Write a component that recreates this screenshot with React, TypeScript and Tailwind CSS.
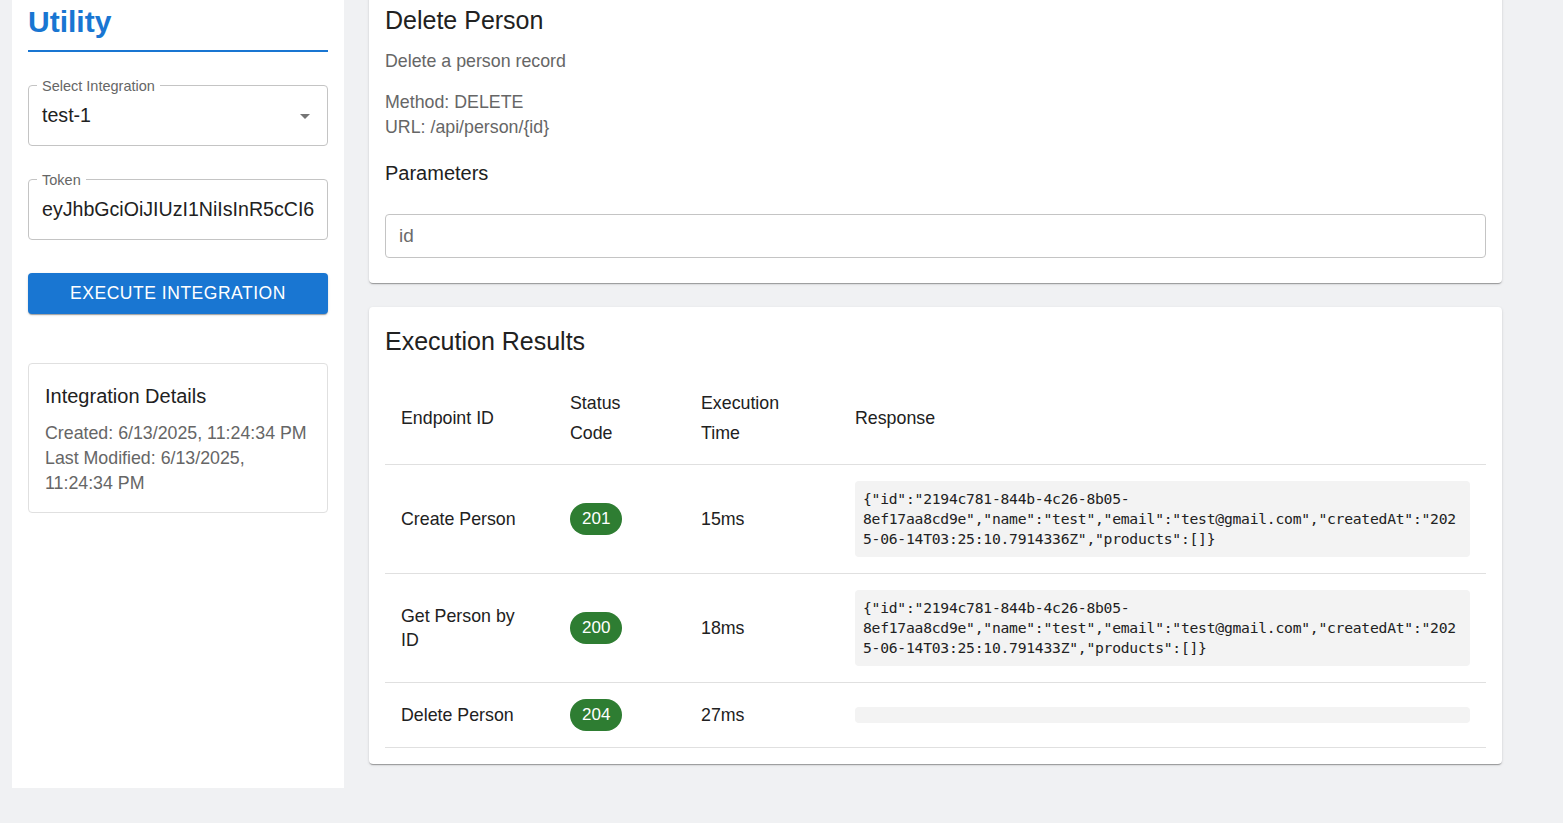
import React from 'react';

interface ResultRow {
  endpoint: string;
  status: number;
  time: string;
  response: string;
}

const RESULTS: ResultRow[] = [
  {
    endpoint: 'Create Person',
    status: 201,
    time: '15ms',
    response:
      '{"id":"2194c781-844b-4c26-8b05-8ef17aa8cd9e","name":"test","email":"test@gmail.com","createdAt":"2025-06-14T03:25:10.7914336Z","products":[]}',
  },
  {
    endpoint: 'Get Person by ID',
    status: 200,
    time: '18ms',
    response:
      '{"id":"2194c781-844b-4c26-8b05-8ef17aa8cd9e","name":"test","email":"test@gmail.com","createdAt":"2025-06-14T03:25:10.791433Z","products":[]}',
  },
  { endpoint: 'Delete Person', status: 204, time: '27ms', response: '' },
];

const TOKEN = 'eyJhbGciOiJIUzI1NiIsInR5cCI6IkpXVCJ9.eyJzdWIiOiIxMjM0NTY3ODkwIn0';

const cardShadow =
  'shadow-[0px_2px_1px_-1px_rgba(0,0,0,0.2),0px_1px_1px_0px_rgba(0,0,0,0.14),0px_1px_3px_0px_rgba(0,0,0,0.12)]';

const App: React.FC = () => {
  return (
    <div className="h-[823px] overflow-hidden bg-[#f0f1f3] font-['Liberation_Sans',Arial,sans-serif] text-[#212121]">
      <div className="flex items-start">
        {/* Sidebar */}
        <aside className="ml-3 w-[332px] h-[788px] bg-white px-4 pt-[4px]">
          <h1 className="text-[30px] leading-[36px] font-bold text-[#1976d2] pb-[10px] border-b-2 border-[#1976d2]">
            Utility
          </h1>

          <div className="relative mt-[33px] h-[61px] border border-[#c4c4c4] rounded flex items-center px-[13px]">
            <span className="absolute -top-[9px] left-[8px] px-[5px] bg-white text-[14.5px] leading-[18px] text-[#666]">
              Select Integration
            </span>
            <span className="text-[19.6px]">test-1</span>
            <svg className="absolute right-[10px] top-1/2 -translate-y-1/2 w-6 h-6 text-[#757575]" viewBox="0 0 24 24" fill="currentColor">
              <path d="M7 10l5 5 5-5z" />
            </svg>
          </div>

          <div className="relative mt-[33px] h-[61px] border border-[#c4c4c4] rounded flex items-center px-[13px]">
            <span className="absolute -top-[9px] left-[8px] px-[5px] bg-white text-[14.5px] leading-[18px] text-[#666]">
              Token
            </span>
            <input
              readOnly
              value={TOKEN}
              className="w-full bg-transparent outline-none text-[19.6px] text-[#212121] font-['Liberation_Sans',Arial,sans-serif]"
            />
          </div>

          <button className={`mt-[33px] w-full h-[41px] rounded bg-[#1976d2] text-white uppercase text-[17.5px] font-medium tracking-[0.03em] ${cardShadow}`}>
            Execute Integration
          </button>

          <div className="mt-[49px] border border-[#e0e0e0] rounded p-4">
            <h3 className="text-[20px] leading-[32px]">Integration Details</h3>
            <div className="mt-[9px] text-[17.8px] leading-[25px] text-[#666]">
              <p>Created: 6/13/2025, 11:24:34 PM</p>
              <p>Last Modified: 6/13/2025, 11:24:34 PM</p>
            </div>
          </div>
        </aside>

        {/* Main */}
        <main className="ml-[25px] w-[1133px] -mt-[12px] flex flex-col gap-6">
          <section className={`bg-white rounded px-4 pt-4 pb-[25px] ${cardShadow}`}>
            <h2 className="text-[25px] leading-[33px]">Delete Person</h2>
            <p className="mt-[11.5px] text-[17.8px] leading-[25px] text-[#666]">Delete a person record</p>
            <div className="mt-4 text-[17.8px] leading-[25px] text-[#666]">
              <p>Method: DELETE</p>
              <p>URL: /api/person/{'{id}'}</p>
            </div>
            <h3 className="mt-[17.5px] text-[20px] leading-[32px]">Parameters</h3>
            <div className="mt-[25px] h-[44px] border border-[#c4c4c4] rounded flex items-center px-[13px] text-[19px] text-[#6b6b6b]">
              id
            </div>
          </section>

          <section className={`bg-white rounded px-4 pt-[18px] pb-4 ${cardShadow}`}>
            <h2 className="text-[25px] leading-[33px]">Execution Results</h2>
            <table className="mt-[14px] w-full table-fixed border-collapse text-[17.8px]">
              <colgroup>
                <col className="w-[169px]" />
                <col className="w-[131px]" />
                <col className="w-[154px]" />
                <col />
              </colgroup>
              <thead>
                <tr className="border-b border-[#e0e0e0]">
                  <th className="p-4 text-left font-normal leading-[30px] align-middle">Endpoint ID</th>
                  <th className="p-4 text-left font-normal leading-[30px] align-middle">
                    Status
                    <br />
                    Code
                  </th>
                  <th className="p-4 text-left font-normal leading-[30px] align-middle">
                    Execution
                    <br />
                    Time
                  </th>
                  <th className="p-4 text-left font-normal leading-[30px] align-middle">Response</th>
                </tr>
              </thead>
              <tbody>
                {RESULTS.map(r => (
                  <tr key={r.endpoint} className="border-b border-[#e0e0e0]">
                    <td className="p-4 leading-[24px] align-middle">
                      <div className="max-w-[130px]">{r.endpoint}</div>
                    </td>
                    <td className="p-4 align-middle">
                      <span className="inline-flex items-center h-8 px-3 rounded-full bg-[#2e7d32] text-white text-[17px]">
                        {r.status}
                      </span>
                    </td>
                    <td className="p-4 leading-[24px] align-middle">{r.time}</td>
                    <td className="p-4 align-middle">
                      <pre className="m-0 p-2 rounded bg-[#f3f3f3] font-['DejaVu_Sans_Mono',monospace] text-[14.7px] leading-[20px] tracking-[-0.25px] whitespace-pre-wrap break-words text-[#212121]">
                        {r.response}
                      </pre>
                    </td>
                  </tr>
                ))}
              </tbody>
            </table>
          </section>
        </main>
      </div>
    </div>
  );
};

export default App;
